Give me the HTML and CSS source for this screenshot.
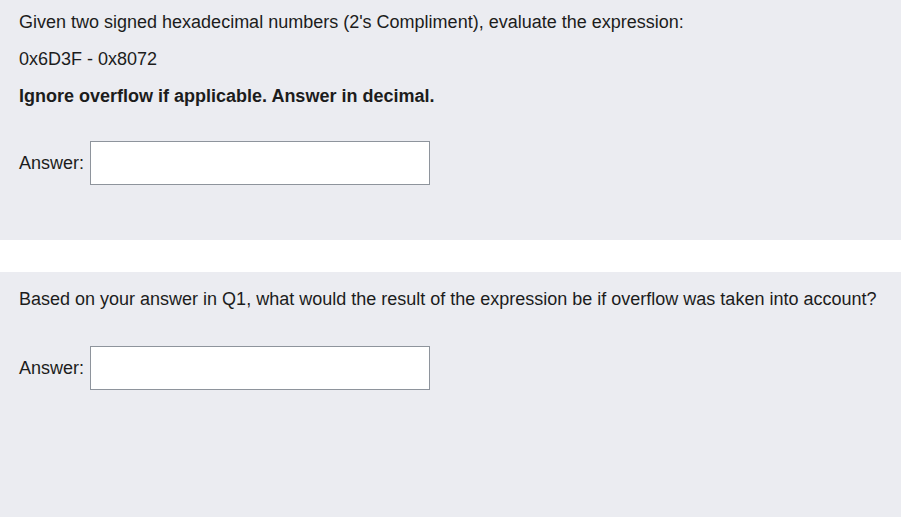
FILE: index.html
```html
<!DOCTYPE html>
<html lang="en">
<head>
<meta charset="utf-8">
<title>Questions</title>
<link rel="stylesheet" href="styles.css">
</head>
<body>
  <section class="panel panel-first">
    <p class="q">Given two signed hexadecimal numbers (2's Compliment), evaluate the expression:</p>
    <p class="q">0x6D3F - 0x8072</p>
    <p class="q strong">Ignore overflow if applicable. Answer in decimal.</p>
    <div class="answer answer-first">
      <label class="label" for="a1">Answer:</label>
      <input class="input" id="a1" type="text">
    </div>
  </section>
  <section class="panel panel-second">
    <p class="q">Based on your answer in Q1, what would the result of the expression be if overflow was taken into account?</p>
    <div class="answer answer-second">
      <label class="label" for="a2">Answer:</label>
      <input class="input" id="a2" type="text">
    </div>
  </section>
</body>
</html>
```

FILE: styles.css
```css
html, body {
  margin: 0;
  padding: 0;
  background: #ffffff;
}
body {
  font-family: "Liberation Sans", Arial, sans-serif;
  font-size: 18px;
  color: #1c1c1c;
}
.panel {
  background: #ebecf1;
  padding: 0 19px;
  box-sizing: border-box;
}
.panel-first {
  height: 240px;
  padding-top: 12px;
}
.panel-second {
  margin-top: 32px;
  height: 245px;
  padding-top: 17px;
}
.q {
  margin: 0 0 16px 0;
  line-height: 21px;
}
.strong {
  font-weight: bold;
}
.answer {
  display: flex;
  align-items: center;
  gap: 6px;
}
.answer-first {
  margin-top: 34px;
}
.answer-second {
  margin-top: 36px;
}
.label {
  line-height: 21px;
}
.input {
  width: 340px;
  height: 44px;
  box-sizing: border-box;
  border: 1px solid #8e949c;
  background: #ffffff;
  margin: 0;
  padding: 0 6px;
  font: inherit;
  outline: none;
}
```
